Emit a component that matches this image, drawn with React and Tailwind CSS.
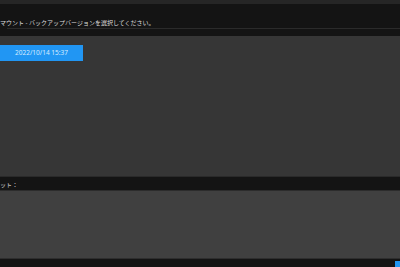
import React from 'react';

export default function App() {
  const font = { fontFamily: '"Noto Sans", "Noto Sans CJK JP", sans-serif' };
  return (
    <div className="w-[400px] h-[267px] overflow-hidden bg-[#141414] flex flex-col" style={font}>
      {/* top strip */}
      <div className="h-[4px] bg-[#262626]" />

      {/* header */}
      <div className="h-[32px] flex flex-col bg-[#141414]">
        <div className="h-[8px] mt-[15px] text-[6px] leading-[8px] text-[#dedede] whitespace-nowrap">
          マウント - バックアップバージョンを選択してください。
        </div>
        <div className="ml-[7px] mt-[1px] h-px bg-[#2b2b2b]" />
      </div>

      {/* version list */}
      <div className="h-[140px] bg-[#363636] pt-[9px]">
        <div className="w-[83px] h-[16px] bg-[#2196f3] flex items-center justify-center text-[6.5px] text-[#d6ebff]">
          2022/10/14 15:37
        </div>
      </div>

      <div className="h-px bg-[#2a2a2a]" />

      {/* label */}
      <div className="h-[13px] flex items-end pb-[1px] text-[6px] leading-[8px] text-[#cfcfcf] whitespace-nowrap">
        ット：
      </div>

      <div className="h-px bg-[#2c2c2c]" />

      {/* comment box */}
      <div className="h-[67px] bg-[#404040]" />

      <div className="h-px bg-[#2e2e2e]" />

      {/* footer */}
      <div className="flex-1 flex justify-end items-end bg-[#141414]">
        <div className="w-[5px] h-[6px] bg-[#2196f3]" />
      </div>
    </div>
  );
}
